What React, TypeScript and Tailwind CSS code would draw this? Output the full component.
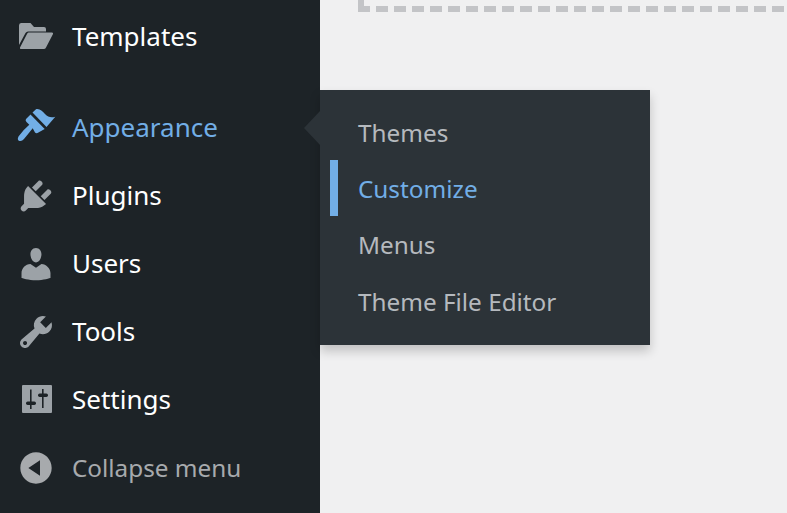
const icons = {
  plugins:
    'M13.11 4.36L9.87 7.6 8 5.73l3.24-3.24c.35-.34 1.05-.2 1.56.32.52.51.66 1.21.31 1.55zm-8 1.77l.91-1.12 9.01 9.01-1.19.84c-.71.71-2.63 1.16-3.82 1.16H6.14L4.9 17.26c-.59.59-1.54.59-2.12 0-.59-.58-.59-1.53 0-2.12l1.24-1.24v-3.88c0-1.13.4-3.19 1.09-3.89zm7.26 3.97l3.24-3.24c.34-.35 1.04-.21 1.55.31.52.51.66 1.21.31 1.55l-3.24 3.25z',
  users:
    'M10 9.25c-2.27 0-2.73-3.44-2.73-3.44C7 4.02 7.82 2 9.97 2c2.16 0 2.98 2.02 2.71 3.81 0 0-.41 3.44-2.68 3.44zm0 2.57L12.72 10c2.39 0 4.52 2.33 4.52 4.53v2.49s-3.65 1.13-7.24 1.13c-3.65 0-7.24-1.13-7.24-1.13v-2.49c0-2.25 1.94-4.48 4.47-4.48z',
  tools:
    'M16.68 9.77c-1.34 1.34-3.3 1.67-4.95.99l-5.41 6.52c-.99.99-2.59.99-3.58 0s-.99-2.59 0-3.57l6.52-5.42c-.68-1.65-.35-3.61.99-4.95 1.28-1.28 3.12-1.62 4.72-1.06l-2.89 2.89 2.82 2.82 2.86-2.87c.53 1.58.18 3.39-1.08 4.65zM3.81 16.21c.4.39 1.04.39 1.43 0 .4-.4.4-1.04 0-1.43-.39-.4-1.03-.4-1.43 0-.39.39-.39 1.03 0 1.43z',
  collapse:
    'M10 2.16c4.33 0 7.84 3.51 7.84 7.84s-3.51 7.84-7.84 7.84S2.16 14.33 2.16 10 5.71 2.16 10 2.16zm2 11.72V6.12L6.18 9.97z',
};

function Dashicon({ d }: { d: string }) {
  return (
    <svg viewBox="0 0 20 20" className="w-10 h-10 shrink-0 fill-current">
      <path d={d} />
    </svg>
  );
}

function FolderIcon() {
  return (
    <svg viewBox="0 0 40 40" className="w-10 h-10 shrink-0 fill-current">
      <path d="M3 8.5Q3 6 5 6H14.5L18 10H28Q30 10 30 12V14.5H12Q10.5 14.5 9.5 16L3 28Z" />
      <path d="M12.5 15.5H36Q37.5 15.5 37 17L30 30.5Q29.5 32 27.5 32H5Q3.5 32 4 30.5L11 17Q11.5 15.5 12.5 15.5Z" />
    </svg>
  );
}

function BrushIcon() {
  return (
    <svg viewBox="0 0 40 40" className="w-10 h-10 shrink-0 fill-current">
      <path d="M16.5 4.5L20 1.2C24 .5 26 3 29 6C32 9 35 10 39.3 8.7L30.5 19Z" />
      <path d="M14.5 6.5L28.7 21L21.5 25Q20 25.5 19 24.5L16.7 20.3Q13 25 8 31Q5.5 34 2.8 32.7Q1 31.5 2.5 28.5Q7 22 13.3 16.7L10.5 14Q9 12.5 10 11Z" />
    </svg>
  );
}

function SettingsIcon() {
  return (
    <svg viewBox="0 0 40 40" className="w-10 h-10 shrink-0">
      <rect x="6" y="5" width="30" height="28" rx="1" fill="currentColor" />
      <rect x="14" y="9.5" width="1.6" height="19.5" fill="#1d2327" />
      <rect x="10" y="21.5" width="10" height="3.5" rx="1.7" fill="#1d2327" />
      <rect x="26" y="9" width="1.6" height="19" fill="#1d2327" />
      <rect x="22" y="13.5" width="10" height="3.5" rx="1.7" fill="#1d2327" />
    </svg>
  );
}

const rows = [
  { label: 'Plugins', icon: <Dashicon d={icons.plugins} /> },
  { label: 'Users', icon: <Dashicon d={icons.users} /> },
  { label: 'Tools', icon: <Dashicon d={icons.tools} /> },
  { label: 'Settings', icon: <SettingsIcon /> },
];

const submenu = ['Themes', 'Customize', 'Menus', 'Theme File Editor'];

export default function App() {
  return (
    <div className="relative flex w-[787px] h-[513px] overflow-hidden bg-[#f0f0f1] font-['Noto_Sans',sans-serif]">
      <aside className="w-80 shrink-0 bg-[#1d2327] pt-[3px] text-[26px] text-white">
        <div className="flex items-center h-[68px] mb-[23px] pl-4">
          <span className="text-[#9ca2a7]">
            <FolderIcon />
          </span>
          <span className="ml-4 pb-[2px]">Templates</span>
        </div>

        <div className="flex items-center h-[68px] pl-4 text-[#72aee6]">
          <BrushIcon />
          <span className="ml-4 pb-[2px]">Appearance</span>
        </div>

        {rows.map((row) => (
          <div key={row.label} className="flex items-center h-[68px] pl-4">
            <span className="text-[#9ca2a7]">{row.icon}</span>
            <span className="ml-4 pb-[2px]">{row.label}</span>
          </div>
        ))}

        <div className="flex items-center h-[68px] pl-4 text-[#a7aaad]">
          <Dashicon d={icons.collapse} />
          <span className="ml-4 text-[24.3px]">Collapse menu</span>
        </div>
      </aside>

      <main className="flex-1 pl-[38px]">
        <div className="w-[6px] h-[6px] bg-[#c3c4c7]" />
        <div className="h-[6px] bg-[repeating-linear-gradient(90deg,#c3c4c7_0,#c3c4c7_12px,transparent_12px,transparent_18px)]" />
      </main>

      <div className="absolute left-80 top-[90px] w-[330px] bg-[#2c3338] pt-[14px] pb-4 text-[24.3px] text-[#b5b9be] shadow-[0_6px_10px_rgba(0,0,0,0.2)]">
        <div className="absolute -left-4 top-[21px] w-0 h-0 border-y-[17px] border-y-transparent border-r-[16px] border-r-[#2c3338]" />
        {submenu.map((item, i) => (
          <div
            key={item}
            className={
              item === 'Customize'
                ? 'flex items-center h-[56px] pt-[2px] ml-[10px] border-l-8 border-[#72aee6] pl-5 text-[#72aee6]'
                : i === 3
                  ? 'flex items-center h-[56px] mt-px pt-[2px] ml-[10px] border-l-8 border-transparent pl-5'
                  : 'flex items-center h-[56px] pt-[2px] ml-[10px] border-l-8 border-transparent pl-5'
            }
          >
            {item}
          </div>
        ))}
      </div>
    </div>
  );
}
